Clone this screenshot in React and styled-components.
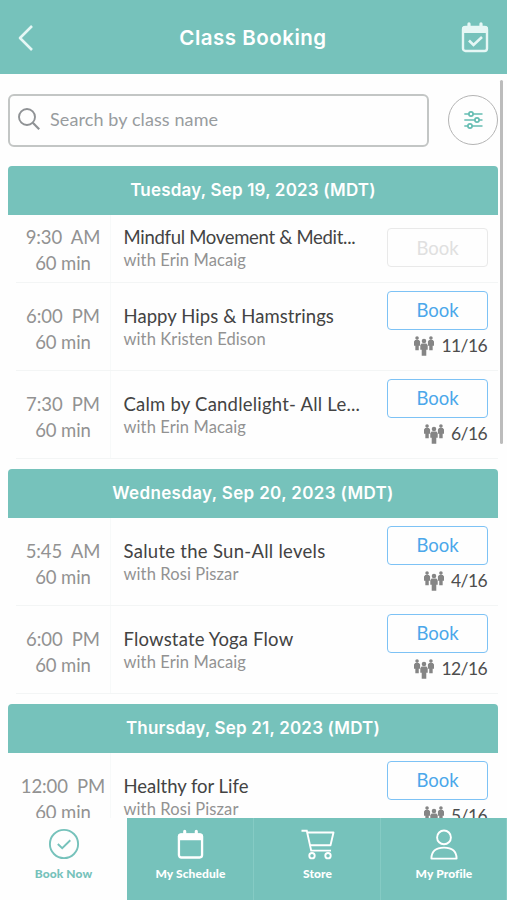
import React from 'react';
import styled, { createGlobalStyle } from 'styled-components';

const teal = '#76c2bb';
const blue = '#4ba7ea';

const GlobalStyle = createGlobalStyle`
  * {
    box-sizing: border-box;
  }
  body {
    margin: 0;
    overflow: hidden;
    background: #fefefe;
    font-family: Lato, "Open Sans", sans-serif;
  }
`;

const Page = styled.div`
  display: flex;
  flex-direction: column;
  height: 900px;
  width: 507px;
  overflow: hidden;
`;

const Header = styled.header`
  display: flex;
  flex: none;
  align-items: center;
  justify-content: space-between;
  height: 74px;
  padding: 1px 18px 0 17px;
  background: ${teal};
`;

const Title = styled.h1`
  margin: 0;
  padding-left: 11px;
  color: #fff;
  font-family: Inter, sans-serif;
  font-size: 20.5px;
  font-weight: 600;
  letter-spacing: 0.5px;
  white-space: nowrap;
`;

const HeaderButton = styled.button`
  display: flex;
  padding: 0;
  border: 0;
  background: none;
  color: #e6f7f5;
`;

const Body = styled.main`
  display: flex;
  flex: 1;
  min-height: 0;
  overflow: hidden;
  padding-left: 8px;
`;

const Content = styled.div`
  flex: none;
  width: 490px;
  padding-top: 20px;
`;

const ScrollThumb = styled.div`
  width: 3px;
  height: 364px;
  margin: 6px 0 0 2px;
  border-radius: 2px;
  background: #bcbcbc;
`;

const SearchRow = styled.div`
  display: flex;
  align-items: flex-start;
  justify-content: space-between;
  height: 53px;
  margin-bottom: 19px;
`;

const SearchBox = styled.div`
  display: flex;
  align-items: center;
  gap: 10px;
  width: 421px;
  height: 53px;
  padding: 0 0 3px 8px;
  border: 2px solid #c3c6c5;
  border-radius: 6px;
  color: #989c9e;
  font-size: 18px;
  letter-spacing: 0.1px;
`;

const FilterButton = styled.button`
  display: flex;
  align-items: center;
  justify-content: center;
  width: 50px;
  height: 50px;
  margin-top: 1px;
  padding: 0;
  border: 1px solid #b4b4b4;
  border-radius: 50%;
  background: none;
`;

const Day = styled.section`
  margin-bottom: 10.3px;
`;

const DayTitle = styled.h2`
  height: 48.6px;
  margin: 0;
  border-radius: 4px 4px 0 0;
  background: ${teal};
  color: #fff;
  font-family: Inter, sans-serif;
  font-size: 17px;
  font-weight: 600;
  line-height: 48px;
  letter-spacing: ${props => props.$spacing}px;
  text-align: center;
`;

const Row = styled.div`
  display: flex;
  height: ${props => (props.$compact ? 68.2 : 88.1)}px;
  margin-left: 8px;
  border-bottom: 1px solid #f3f5f5;
`;

const Time = styled.div`
  width: 95px;
  padding-top: ${props => (props.$compact ? 9 : 20)}px;
  border-right: 1px solid #f7f9f9;
  color: #929292;
  font-size: 18.5px;
  line-height: 26px;
  letter-spacing: -0.1px;
  text-align: center;
  white-space: pre;
`;

const Info = styled.div`
  flex: 1;
  min-width: 0;
  padding: ${props => (props.$compact ? 11.5 : 22)}px 0 0 12.5px;
  white-space: nowrap;
`;

const ClassName = styled.div`
  color: #434343;
  font-size: 18.5px;
  line-height: 23px;
  letter-spacing: ${props => props.$spacing}px;
`;

const Teacher = styled.div`
  color: #929292;
  font-size: 16.5px;
  line-height: 23px;
  letter-spacing: 0.1px;
`;

const Actions = styled.div`
  width: 111px;
  padding: ${props => (props.$compact ? 13.5 : 8)}px 10px 0 0;
`;

const BookButton = styled.button`
  display: block;
  width: 101px;
  height: 39px;
  padding: 0;
  border: 1.5px solid ${props => (props.disabled ? '#e9e9e9' : '#7dc2f5')};
  border-radius: 4px;
  background: none;
  color: ${props => (props.disabled ? '#e0e0e0' : blue)};
  font-family: inherit;
  font-size: 18.5px;
`;

const Spots = styled.div`
  display: flex;
  align-items: center;
  justify-content: flex-end;
  gap: 7px;
  margin-top: 4px;
  padding-right: 1px;
  color: #4d4d4d;
  font-size: 17.5px;
  line-height: 24px;
  letter-spacing: -0.6px;
`;

const Nav = styled.nav`
  display: grid;
  flex: none;
  grid-template-columns: 127px 127px 127px 126px;
  height: 82px;
`;

const Tab = styled.a`
  display: flex;
  flex-direction: column;
  align-items: center;
  padding: 10px 0 0 1px;
  border-right: 1px solid ${props => (props.$active ? '#fefefe' : '#85cbc4')};
  background: ${props => (props.$active ? '#fefefe' : teal)};
  color: ${props => (props.$active ? teal : '#fff')};
  font-size: 12px;
  font-weight: 900;
  line-height: 20px;
  letter-spacing: 0.1px;
`;

const TabIcon = styled.span`
  display: flex;
  align-items: center;
  height: 32px;
  margin-bottom: 4px;
`;

const BackIcon = () => (
  <svg width="17" height="28" viewBox="0 0 17 28" fill="none" stroke="currentColor" strokeWidth="2.6">
    <path d="M15 2 L3 14 L15 26" strokeLinejoin="round" />
  </svg>
);

const CalendarIcon = ({ checked }) => (
  <svg width={checked ? 28 : 27} height="31" viewBox="0 0 28 31" fill="none" stroke="currentColor">
    <rect x="2" y="5" width="24" height="24" rx="2.5" strokeWidth="2.4" />
    <path d="M1 11 V7 Q1 4 4 4 H24 Q27 4 27 7 V11 Z" fill="currentColor" stroke="none" />
    <path d="M8 1.8 V6 M20 1.8 V6" strokeWidth="3.2" strokeLinecap="round" />
    {checked && <path d="M8 18.5 L12.5 23 L21 15" strokeWidth="2.6" />}
  </svg>
);

const SearchIcon = () => (
  <svg width="22" height="22" viewBox="0 0 22 22" fill="none" stroke="#8f9295" strokeWidth="1.9">
    <circle cx="9" cy="9" r="8" />
    <path d="M14.8 14.8 L21.2 21.2" strokeWidth="2.2" />
  </svg>
);

const FilterIcon = () => (
  <svg width="19" height="18" viewBox="0 0 19 18" fill="#fefefe" stroke="#65bdb2" strokeWidth="1.7">
    <path d="M.3 3 H18.5 M.3 9 H18.5 M.3 15 H18.5" />
    <circle cx="7" cy="3" r="2.1" />
    <circle cx="13" cy="9" r="2.1" />
    <circle cx="6" cy="15" r="2.1" />
  </svg>
);

const PeopleIcon = () => (
  <svg width="20" height="20" viewBox="0 0 21 21" fill="#858585">
    <circle cx="3.2" cy="2.2" r="1.9" />
    <path d="M1.2 4.2 H5.2 L6.4 5.8 V10.3 H5 V15 H1.4 V10.3 H0 V5.8 Z" />
    <circle cx="17.8" cy="2.2" r="1.9" />
    <path d="M15.8 4.2 H19.8 L21 5.8 V10.3 H19.6 V15 H16 V10.3 H14.6 V5.8 Z" />
    <circle cx="10.5" cy="5.2" r="2.4" />
    <path d="M8 8 H13 L14.4 9.7 V14.5 H12.9 V20.7 H8.1 V14.5 H6.6 V9.7 Z" />
  </svg>
);

const CheckIcon = () => (
  <svg width="32" height="32" viewBox="0 0 32 32" fill="none" stroke="currentColor" strokeWidth="1.9">
    <circle cx="16" cy="16" r="14.1" />
    <path d="M9.8 16 L14.2 20.2 L22.3 12.2" />
  </svg>
);

const CartIcon = () => (
  <svg width="34" height="32" viewBox="0 0 34 32" fill="none" stroke="currentColor" strokeWidth="1.9">
    <path d="M.5 2.8 H5.8 L10.2 22.6 H30" />
    <path d="M6.2 4.5 H32.5 L29.5 17.3 H9" strokeLinejoin="round" />
    <circle cx="11" cy="27.7" r="2.7" />
    <circle cx="27" cy="27.7" r="2.7" />
  </svg>
);

const ProfileIcon = () => (
  <svg width="28" height="32" viewBox="0 0 28 32" fill="none" stroke="currentColor" strokeWidth="1.9">
    <circle cx="14" cy="9.4" r="6.9" />
    <path d="M1.4 30.6 C1.4 23.6 5.5 19.6 14 19.6 S26.6 23.6 26.6 30.6 Z" strokeLinejoin="round" />
  </svg>
);

// spacing is the letter-spacing in px
const days = [
  {
    title: 'Tuesday, Sep 19, 2023 (MDT)',
    spacing: 0.19,
    classes: [
      { time: '9:30  AM', name: 'Mindful Movement & Medit...', spacing: -0.3, teacher: 'Erin Macaig' },
      { time: '6:00  PM', name: 'Happy Hips & Hamstrings', spacing: 0.07, teacher: 'Kristen Edison', spots: '11/16' },
      { time: '7:30  PM', name: 'Calm by Candlelight- All Le...', spacing: 0.22, teacher: 'Erin Macaig', spots: '6/16' },
    ],
  },
  {
    title: 'Wednesday, Sep 20, 2023 (MDT)',
    spacing: 0.35,
    classes: [
      { time: '5:45  AM', name: 'Salute the Sun-All levels', spacing: 0.28, teacher: 'Rosi Piszar', spots: '4/16' },
      { time: '6:00  PM', name: 'Flowstate Yoga Flow', spacing: 0.17, teacher: 'Erin Macaig', spots: '12/16' },
    ],
  },
  {
    title: 'Thursday, Sep 21, 2023 (MDT)',
    spacing: 0.18,
    classes: [
      { time: '12:00  PM', name: 'Healthy for Life', spacing: -0.03, teacher: 'Rosi Piszar', spots: '5/16' },
    ],
  },
];

const ClassRow = ({ item }) => {
  const compact = !item.spots;
  return (
    <Row $compact={compact}>
      <Time $compact={compact}>
        <div>{item.time}</div>
        <div>60 min</div>
      </Time>
      <Info $compact={compact}>
        <ClassName $spacing={item.spacing}>{item.name}</ClassName>
        <Teacher>with {item.teacher}</Teacher>
      </Info>
      <Actions $compact={compact}>
        <BookButton disabled={compact}>Book</BookButton>
        {item.spots && (
          <Spots>
            <PeopleIcon />
            <span>{item.spots}</span>
          </Spots>
        )}
      </Actions>
    </Row>
  );
};

const App = () => (
  <Page>
    <GlobalStyle />
    <Header>
      <HeaderButton><BackIcon /></HeaderButton>
      <Title>Class Booking</Title>
      <HeaderButton><CalendarIcon checked /></HeaderButton>
    </Header>
    <Body>
      <Content>
        <SearchRow>
          <SearchBox>
            <SearchIcon />
            <span>Search by class name</span>
          </SearchBox>
          <FilterButton><FilterIcon /></FilterButton>
        </SearchRow>
        {days.map(day => (
          <Day key={day.title}>
            <DayTitle $spacing={day.spacing}>{day.title}</DayTitle>
            {day.classes.map(item => <ClassRow key={item.name} item={item} />)}
          </Day>
        ))}
      </Content>
      <ScrollThumb />
    </Body>
    <Nav>
      <Tab $active><TabIcon><CheckIcon /></TabIcon>Book Now</Tab>
      <Tab><TabIcon><CalendarIcon /></TabIcon>My Schedule</Tab>
      <Tab><TabIcon><CartIcon /></TabIcon>Store</Tab>
      <Tab><TabIcon><ProfileIcon /></TabIcon>My Profile</Tab>
    </Nav>
  </Page>
);

export default App;
